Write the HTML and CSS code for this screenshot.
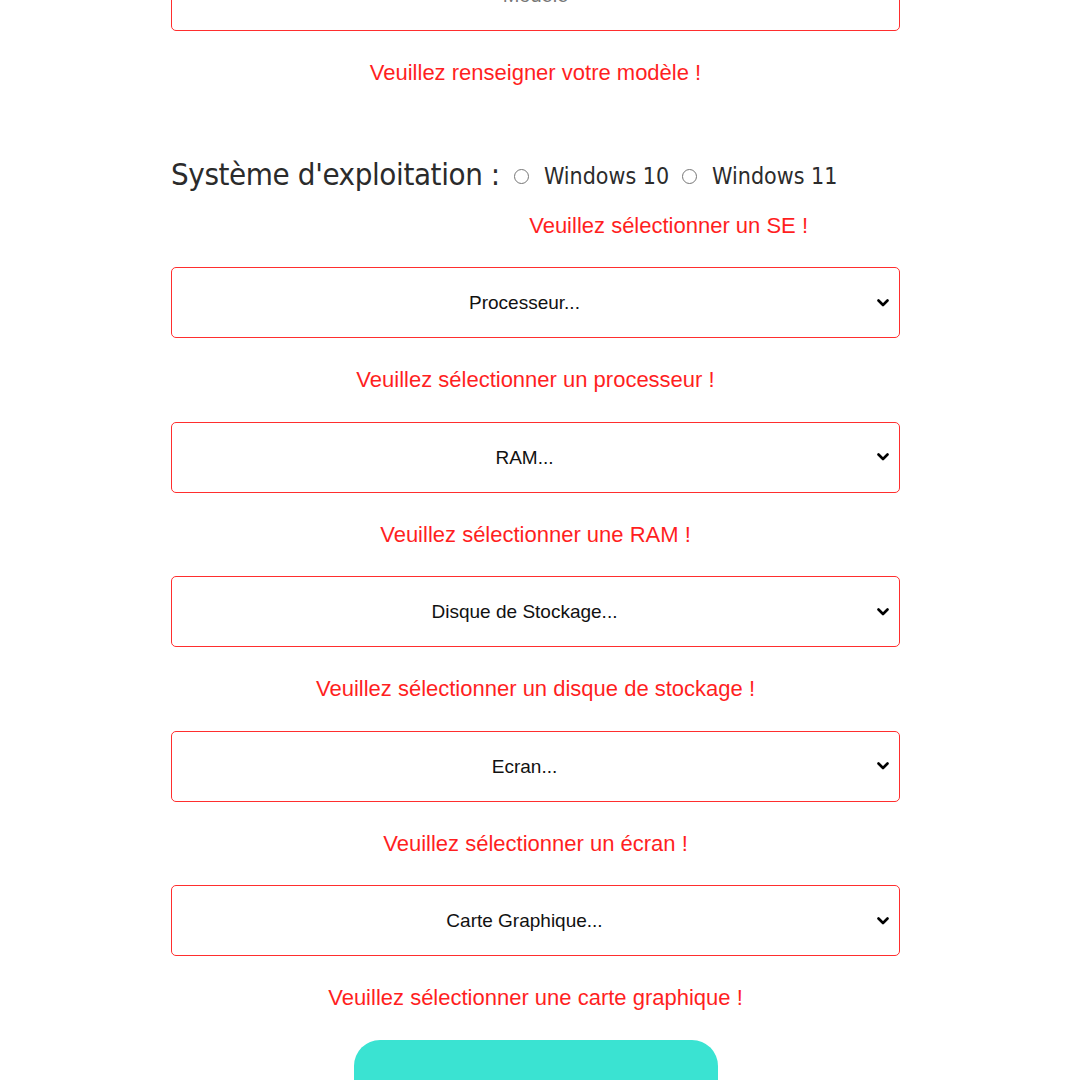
FILE: index.html
```html
<!DOCTYPE html>
<html lang="fr">
<head>
<meta charset="utf-8">
<title>Configuration</title>
<link rel="stylesheet" href="styles.css">
</head>
<body>
<form class="form">
  <input class="field" type="text" placeholder="Modèle">
  <p class="error error-first">Veuillez renseigner votre modèle !</p>

  <div class="os">
    <span class="os-label">Système d'exploitation :</span>
    <div class="os-choices">
      <div class="radios">
        <label class="radio"><input type="radio" name="os">Windows 10</label>
        <label class="radio"><input type="radio" name="os">Windows 11</label>
      </div>
      <p class="error error-os">Veuillez sélectionner un SE !</p>
    </div>
  </div>

  <select class="field select"><option>Processeur...</option></select>
  <p class="error">Veuillez sélectionner un processeur !</p>

  <select class="field select"><option>RAM...</option></select>
  <p class="error">Veuillez sélectionner une RAM !</p>

  <select class="field select"><option>Disque de Stockage...</option></select>
  <p class="error">Veuillez sélectionner un disque de stockage !</p>

  <select class="field select"><option>Ecran...</option></select>
  <p class="error">Veuillez sélectionner un écran !</p>

  <select class="field select"><option>Carte Graphique...</option></select>
  <p class="error">Veuillez sélectionner une carte graphique !</p>

  <button class="submit" type="button">Envoyer la demande</button>
</form>
</body>
</html>
```

FILE: styles.css
```css
html, body {
  margin: 0;
  padding: 0;
  background: #ffffff;
  overflow: hidden;
}

body {
  font-family: "Liberation Sans", Arial, sans-serif;
}

.form {
  width: 729px;
  margin: -40px 0 0 171px;
  display: flex;
  flex-direction: column;
  align-items: center;
}

.field {
  box-sizing: border-box;
  width: 100%;
  height: 71px;
  border: 1px solid #ff2e2e;
  border-radius: 5px;
  background-color: #ffffff;
  font-family: "Liberation Sans", Arial, sans-serif;
  font-size: 20px;
  text-align: center;
  color: #111;
  outline: none;
}

.field::placeholder {
  color: #777;
}

.select {
  -webkit-appearance: none;
  appearance: none;
  font-size: 19px;
  text-align-last: center;
  padding: 0 22px 0 0;
  color: #111;
  background-image: url("data:image/svg+xml,%3Csvg xmlns='http://www.w3.org/2000/svg' width='12' height='8' viewBox='0 0 12 8'%3E%3Cpath d='M1.5 1.5 L6 6 L10.5 1.5' fill='none' stroke='%23000' stroke-width='2.6' stroke-linecap='round' stroke-linejoin='round'/%3E%3C/svg%3E");
  background-repeat: no-repeat;
  background-position: right 10px center;
  background-size: 12px 8px;
}

.error {
  margin: 30px 0 29.5px;
  font-size: 22px;
  line-height: 24px;
  color: #ff1f1f;
  text-align: center;
}

.error-first {
  margin-bottom: 69px;
}

.os {
  align-self: stretch;
  display: flex;
  align-items: flex-start;
  margin-bottom: 29px;
}

.os-label {
  font-family: "DejaVu Sans Condensed", "DejaVu Sans", sans-serif;
  font-stretch: condensed;
  font-size: 31px;
  line-height: 40px;
  color: #2b2b2b;
  letter-spacing: -0.4px;
}

.os-choices {
  display: flex;
  flex-direction: column;
  align-items: center;
  margin-left: 14px;
  padding-top: 8px;
}

.radios {
  display: flex;
  gap: 13px;
}

.radio {
  display: flex;
  align-items: center;
  font-family: "DejaVu Sans Condensed", "DejaVu Sans", sans-serif;
  font-stretch: condensed;
  font-size: 23px;
  line-height: 28px;
  color: #2b2b2b;
}

.radio input {
  width: 15px;
  height: 15px;
  margin: 0 15px 0 0;
}

.error-os {
  margin: 24px 0 0 -14px;
}

.submit {
  width: 364px;
  height: 70px;
  border: none;
  border-radius: 26px;
  background: #3ae3d2;
  color: #fff;
  font-family: "Liberation Sans", Arial, sans-serif;
  font-size: 24px;
  padding-top: 30px;
}
```
